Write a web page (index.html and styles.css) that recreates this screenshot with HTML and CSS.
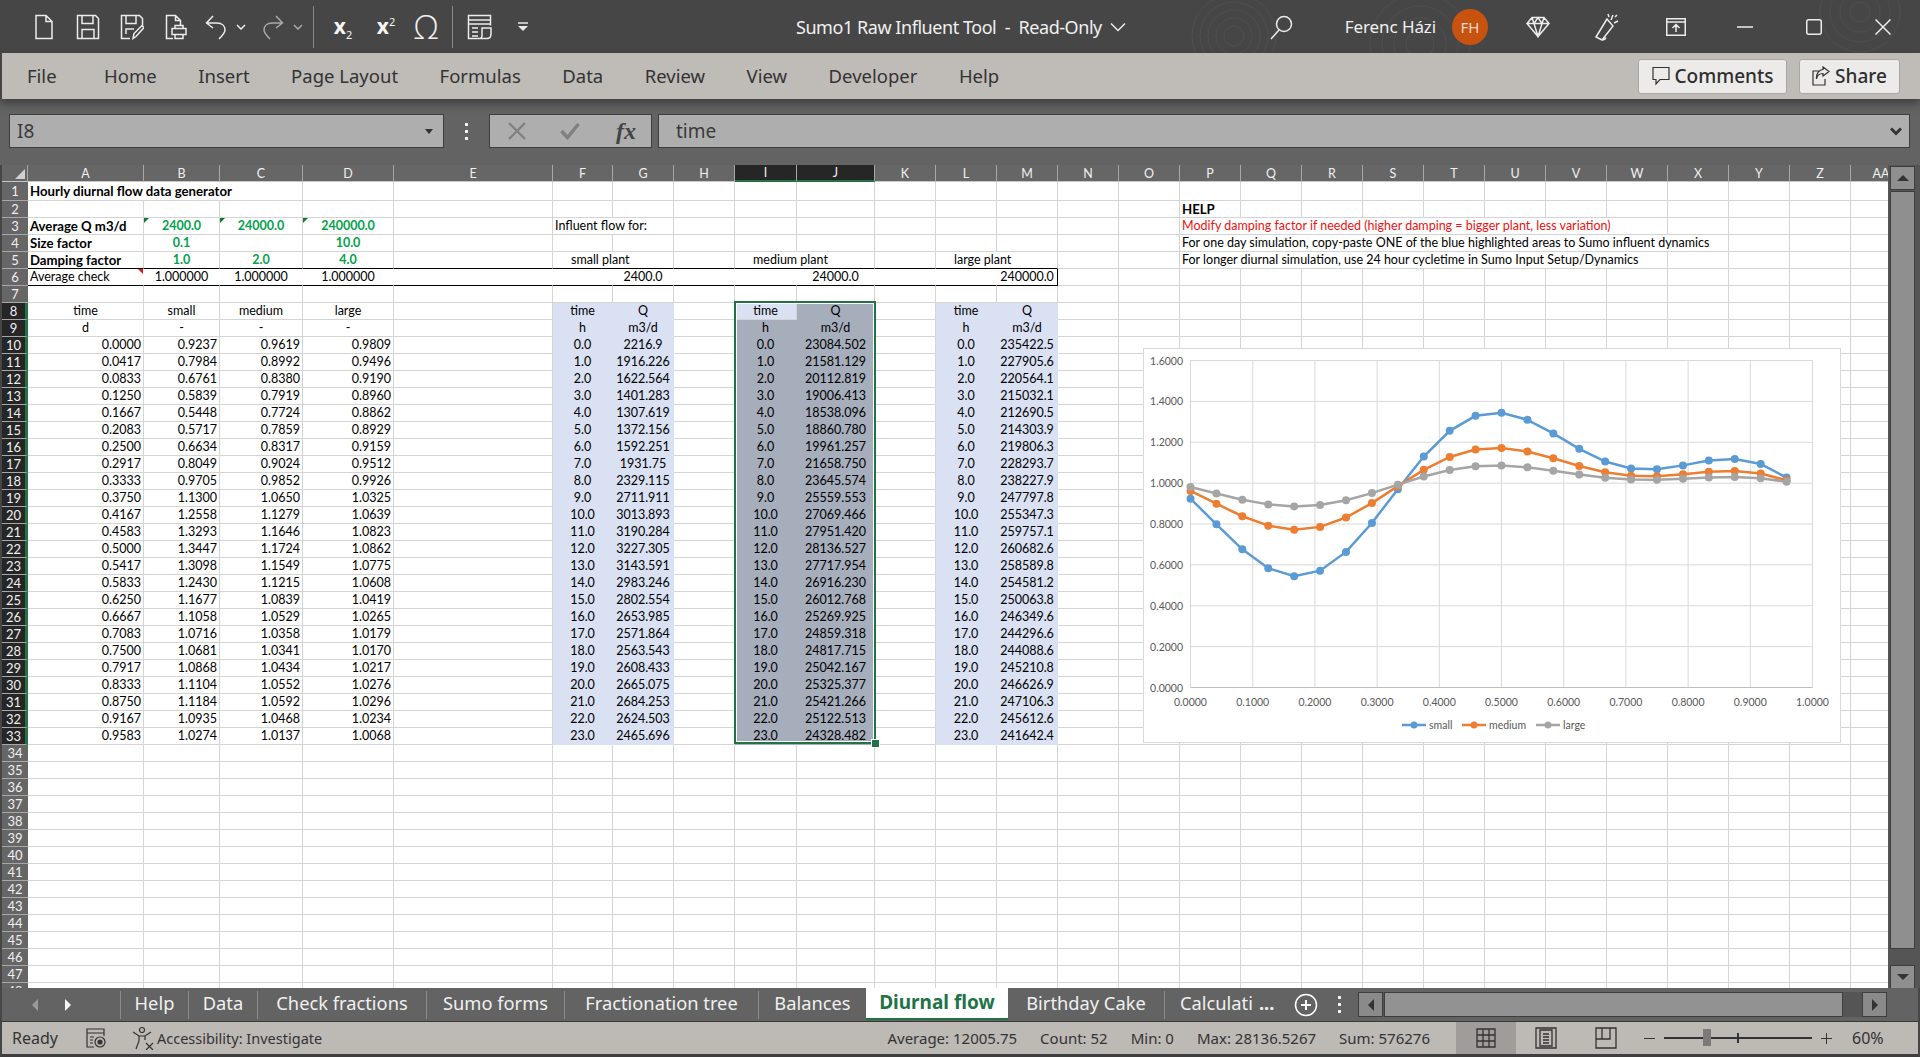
FILE: index.html
```html
<!DOCTYPE html>
<html lang="en">
  <head>
    <meta charset="UTF-8" />
    <meta name="viewport" content="width=device-width, initial-scale=1.0" />
    <title>Sumo1 Raw Influent Tool - Read-Only</title>
    <link rel="stylesheet" href="styles.css">
  </head>
  <body>
    <header class="titlebar">
      <svg class="rings" width="1920" height="53" viewBox="0 0 1920 53" fill="none" stroke="#4f4f4f">
        <circle cx="1234" cy="36" r="10" /><circle cx="1234" cy="36" r="18" /><circle cx="1234" cy="36" r="26" /><circle cx="1234" cy="36" r="34" /><circle cx="1234" cy="36" r="42" />
        <circle cx="1420" cy="44" r="14" /><circle cx="1420" cy="44" r="26" /><circle cx="1420" cy="44" r="38" /><circle cx="1420" cy="44" r="50" />
        <circle cx="1860" cy="12" r="10" /><circle cx="1860" cy="12" r="20" /><circle cx="1860" cy="12" r="30" /><circle cx="1860" cy="12" r="40" />
      </svg>
      <div class="quick-access">
        <span class="qa-btn w44"><svg class="icon" width="24" height="26" viewBox="0 0 24 26"><path d="M4 1.5h10l6 6v17H4zM14 1.5v6h6" /></svg></span>
        <span class="qa-btn w44"><svg class="icon" width="24" height="26" viewBox="0 0 24 26"><path d="M1.5 1.5h18l3 3v20h-21zM6 1.5v8h11v-8M6 24.5v-9h12v9" /></svg></span>
        <span class="qa-btn w44"><svg class="icon" width="24" height="26" viewBox="0 0 24 26"><path d="M10 24.500H1.500v-23h18l3 3v7M6 1.500v8h10v-8M6 20v-5h8M13 24.500l1-5 8-8 2 2-8 9z" /></svg></span>
        <span class="qa-btn w44"><svg class="icon" width="22" height="26" viewBox="0 0 22 26"><path d="M8 24.500H1.500v-23h9l5 5v5M10.500 1.500v5h5M7 20.500h14v-6H7zM10 14.500v-3h8v3M10 20.500v4h8v-4" /></svg></span>
        <span class="qa-btn w36"><svg class="icon" width="24" height="26" viewBox="0 0 24 26"><path d="M9 2L2.500 9l6.500 5M2.500 9H13c5 0 8 3 8 7 0 3-3 6-6 9" /></svg></span>
        <span class="qa-btn w14"><svg class="icon" width="10" height="6" viewBox="0 0 10 6"><path d="M1 1l4 4 4-4" /></svg></span>
        <span class="qa-btn w36 dim redo"><svg class="icon" width="24" height="26" viewBox="0 0 24 26"><path d="M15 2l6.500 7-6.500 5M21.500 9H11c-5 0-8 3-8 7 0 3 3 6 6 9" /></svg></span>
        <span class="qa-btn w14 dim"><svg class="icon" width="10" height="6" viewBox="0 0 10 6"><path d="M1 1l4 4 4-4" /></svg></span>
        <span class="qa-sep first"></span>
        <span class="qa-btn w44 script"><span>x<sub>2</sub></span></span>
        <span class="qa-btn w42 script"><span>x<sup>2</sup></span></span>
        <span class="qa-btn w38 omega">Ω</span>
        <span class="qa-sep"></span>
        <span class="qa-btn w40"><svg class="icon" width="26" height="26" viewBox="0 0 26 26"><path d="M13 24.500H1.500v-23h22v10M1.500 6h22M1.500 10h22M5 14h6M5 18h6M5 22h6M15 14h9v6c0 3-2 4.500-4 4.500h-7c2 0 2-2 2-3.500z" /></svg></span>
        <span class="qa-btn w46"><svg width="12" height="10" viewBox="0 0 12 10"><path d="M1 1h10" stroke="#e8e8e8" stroke-width="1.500" /><path d="M1 4h10L6 9z" fill="#e8e8e8" /></svg></span>
      </div>
      <div class="doc-title">Sumo1 Raw Influent Tool &nbsp;-&nbsp; Read-Only</div>
      <svg class="icon title-chevron" width="16" height="10" viewBox="0 0 16 10"><path d="M1 1.500l7 7 7-7" /></svg>
      <div class="account">
        <svg class="icon search" width="24" height="26" viewBox="0 0 24 26"><circle cx="15" cy="10" r="7.500" /><path d="M10 16l-8 9" /></svg>
        <span class="user-name">Ferenc Házi</span>
        <span class="avatar">FH</span>
        <span class="win-btn"><svg class="icon" width="24" height="22" viewBox="0 0 24 22"><path d="M6 1.500h12l5 6-11 13L1 7.500zM1 7.500h22M8 7.500l4 13 4-13M6 1.500l2 6 4-6 4 6 2-6" /></svg></span>
        <span class="win-btn"><svg class="icon" width="26" height="28" viewBox="0 0 26 28"><path d="M13 6L2 24l6 3 11-14zM6 25.500c1 2 5 2 6-1M17 7l2-5M20 10l4-2M15 4l-1-3M21 4l2-2" /></svg></span>
        <span class="win-btn"><svg class="icon" width="20" height="18" viewBox="0 0 20 18"><path d="M.75.75h18.500v16.500H.75zM.75 4h18.500M10 14V7M6.500 10L10 6.500l3.500 3.500" /></svg></span>
        <span class="win-btn"><svg class="icon" width="16" height="2" viewBox="0 0 16 2"><path d="M0 1h16" /></svg></span>
        <span class="win-btn"><svg class="icon" width="16" height="16" viewBox="0 0 16 16"><rect x=".75" y=".75" width="14.500" height="14.500" rx="2" /></svg></span>
        <span class="win-btn"><svg class="icon" width="16" height="16" viewBox="0 0 16 16"><path d="M.5.500l15 15M15.500.500l-15 15" /></svg></span>
      </div>
    </header>

    <nav class="ribbon">
      <ul class="ribbon-tabs">
        <li class="file-tab">File</li>
        <li>Home</li>
        <li>Insert</li>
        <li>Page Layout</li>
        <li>Formulas</li>
        <li>Data</li>
        <li>Review</li>
        <li>View</li>
        <li>Developer</li>
        <li>Help</li>
      </ul>
      <button type="button" class="ribbon-btn comments">
        <svg width="18" height="20" viewBox="0 0 18 20" fill="none" stroke="#333" stroke-width="1.200"><path d="M1 1.500h16v12H8l-4 4.500v-4.500H1z" /></svg>
        Comments
      </button>
      <button type="button" class="ribbon-btn share">
        <svg width="18" height="20" viewBox="0 0 18 20" fill="none" stroke="#333" stroke-width="1.200"><path d="M8 5H1v14h12v-6M11 1l6 4.500L11 10V7.500C7 7.500 5 10 4.500 13 4 8 7 3.500 11 3.500z" /></svg>
        Share
      </button>
    </nav>

    <div class="formula-row">
      <div class="name-box">
        <span>I8</span>
        <i class="caret-down"></i>
      </div>
      <div class="formula-dots"><i></i><i></i><i></i></div>
      <div class="formula-actions">
        <svg width="18" height="18" viewBox="0 0 18 18" fill="none" stroke="#808080" stroke-width="2.400"><path d="M1 1l16 16M17 1L1 17" /></svg>
        <svg width="20" height="18" viewBox="0 0 20 18" fill="none" stroke="#808080" stroke-width="3.500"><path d="M1.500 9l6 6.500L18.500 2" /></svg>
        <span class="fx">fx</span>
      </div>
      <div class="formula-input">
        <span>time</span>
        <svg width="12" height="9" viewBox="0 0 12 9" fill="none" stroke="#333" stroke-width="3"><path d="M1 1.500l5 5 5-5" /></svg>
      </div>
    </div>

    <main class="sheet-area">
      <div class="sheet" id="sheet">
        <table class="grid" id="grid"></table>
        <div class="selection"><i class="fill-handle"></i></div>
        <div class="chart" id="chart"></div>
      </div>
      <div class="v-scroll">
        <span class="scroll-btn"><i class="tri-up"></i></span>
        <span class="v-thumb"></span>
        <span class="scroll-btn"><i class="tri-down"></i></span>
      </div>
    </main>

    <div class="tabs-row">
      <div class="tab-nav">
        <i class="tri-left dim-tri"></i>
        <i class="tri-right"></i>
      </div>
      <div class="tab t-help">Help</div>
      <div class="tab t-data">Data</div>
      <div class="tab t-check">Check fractions</div>
      <div class="tab t-sumo">Sumo forms</div>
      <div class="tab t-tree">Fractionation tree</div>
      <div class="tab t-bal">Balances</div>
      <div class="tab active t-flow">Diurnal flow</div>
      <div class="tab t-cake">Birthday Cake</div>
      <div class="tab t-calc">Calculati <b>...</b></div>
      <svg class="add-sheet" width="24" height="24" viewBox="0 0 24 24" fill="none" stroke="#fff" stroke-width="1.500"><circle cx="12" cy="12" r="10.500" /><path d="M12 7v10M7 12h10" stroke-width="2" /></svg>
      <div class="tabs-dots"><i></i><i></i><i></i></div>
      <div class="h-scroll">
        <span class="scroll-btn h"><i class="tri-left"></i></span>
        <span class="h-thumb"></span>
        <span class="scroll-btn h"><i class="tri-right"></i></span>
      </div>
    </div>

    <footer class="statusbar">
      <span class="ready">Ready</span>
      <svg class="status-icon" width="20" height="20" viewBox="0 0 20 20" fill="none" stroke="#333" stroke-width="1.200"><path d="M8 19H1V1h17v7M1 5h17M4 9h4M4 12h3M4 15h3" /><circle cx="14" cy="14" r="5" /><circle cx="14" cy="14" r="2" fill="#333" /></svg>
      <svg class="status-icon access" width="24" height="24" viewBox="0 0 24 24" fill="none" stroke="#333" stroke-width="1.200"><circle cx="10" cy="4" r="2.500" /><path d="M1 6l6 4h6l6-4M7 10v5l-3 8M13 10v4M14 17l7 7M21 17l-7 7" /></svg>
      <span class="access-text">Accessibility: Investigate</span>
      <div class="stats">
        <span>Average: 12005.75</span>
        <span>Count: 52</span>
        <span>Min: 0</span>
        <span>Max: 28136.5267</span>
        <span>Sum: 576276</span>
      </div>
      <span class="view-btn current"><svg width="20" height="20" viewBox="0 0 20 20" fill="none" stroke="#333" stroke-width="1.300"><path d="M1 1h18v18H1zM7 1v18M13 1v18M1 7h18M1 13h18" /></svg></span>
      <span class="view-btn"><svg width="22" height="22" viewBox="0 0 22 22" fill="none" stroke="#333" stroke-width="1.300"><path d="M1 1h20v20H1zM5 3h12v16H5zM8 7h6M8 10h6M8 13h6M8 16h6" /></svg></span>
      <span class="view-btn"><svg width="22" height="22" viewBox="0 0 22 22" fill="none" stroke="#333" stroke-width="1.300"><path d="M1 1h20v20H1zM1 12h14V1M7 1v11" /></svg></span>
      <div class="zoom-ctl">
        <i class="zoom-minus"></i>
        <div class="zoom-slider"><i class="zoom-tick"></i><i class="zoom-thumb"></i></div>
        <i class="zoom-plus"></i>
        <span class="zoom-val">60%</span>
      </div>
    </footer>

    <script src="sheet.js"></script>
  </body>
</html>
```

FILE: styles.css
```css
* {
  box-sizing: border-box;
}

body {
  margin: 0;
  width: 1920px;
  height: 1057px;
  overflow: hidden;
  display: flex;
  flex-direction: column;
  background: #666;
  font-family: "Noto Sans", sans-serif;
}

ul {
  list-style: none;
  margin: 0;
  padding: 0;
}

.icon {
  fill: none;
  stroke: #ececec;
  stroke-width: 1.5;
}

/* title bar */
.titlebar {
  height: 53px;
  flex: none;
  display: flex;
  align-items: center;
  position: relative;
  background: #464646;
  color: #f0f0f0;
  overflow: hidden;
}

.rings {
  position: absolute;
  left: 0;
  top: 0;
}

.quick-access {
  display: flex;
  align-items: center;
  height: 100%;
  padding-left: 22px;
  position: relative;
}

.qa-btn {
  display: flex;
  align-items: center;
  justify-content: center;
  height: 100%;
  flex: none;
}

.w14 { width: 14px; }
.w36 { width: 36px; }
.w38 { width: 38px; }
.w40 { width: 40px; }
.w42 { width: 42px; }
.w44 { width: 44px; }
.w46 { width: 46px; }

.redo {
  margin-left: 7px;
}

.dim {
  opacity: 0.6;
}

.qa-sep {
  width: 1px;
  height: 42px;
  margin: 0 7px 0 7px;
  background: #8a8a8a;
}

.qa-sep.first {
  margin-left: 8px;
}

.script {
  font-weight: 700;
  font-size: 21px;
  color: #f5f5f5;
  line-height: 1;
}

.script sub,
.script sup {
  font-size: 11px;
  font-weight: 400;
  line-height: 0;
}

.omega {
  font-family: "Open Sans", "Noto Sans", sans-serif;
  font-size: 33px;
  font-weight: 300;
  line-height: 1;
}

.doc-title {
  margin-left: 250px;
  font-size: 18px;
  letter-spacing: -0.45px;
  white-space: nowrap;
  position: relative;
}

.title-chevron {
  margin-left: 8px;
  position: relative;
}

.account {
  margin-left: auto;
  display: flex;
  align-items: center;
  height: 100%;
  padding-right: 3px;
  position: relative;
}

.search {
  margin-right: 52px;
}

.user-name {
  font-size: 17px;
  letter-spacing: -0.1px;
  margin-right: 16px;
  white-space: nowrap;
}

.avatar {
  width: 36px;
  height: 36px;
  border-radius: 50%;
  background: #c8520f;
  color: #f3d9c8;
  font-size: 15px;
  display: flex;
  align-items: center;
  justify-content: center;
  margin-right: 15px;
}

.win-btn {
  width: 69px;
  display: flex;
  justify-content: center;
  align-items: center;
}

/* ribbon tabs */
.ribbon {
  height: 46px;
  flex: none;
  display: flex;
  align-items: center;
  background: #bfbbb7;
  color: #333;
  box-shadow: 0 5px 8px rgba(0, 0, 0, 0.35);
  position: relative;
  border-left: 2px solid #464646;
}

.ribbon-tabs {
  display: flex;
  gap: 41.500px;
  margin-left: 25px;
  padding-bottom: 2px;
  font-size: 18.500px;
  white-space: nowrap;
}

.file-tab {
  margin-right: 6px;
}

.ribbon-btn {
  height: 35px;
  display: flex;
  align-items: center;
  justify-content: center;
  gap: 5px;
  border: 1px solid #a9a6a3;
  border-radius: 3px;
  background: #ecebe9;
  color: #2e2e2e;
  font-family: "Noto Sans", sans-serif;
  font-size: 19px;
  font-weight: 500;
  padding-bottom: 1px;
}

.comments {
  width: 149px;
  margin-left: auto;
}

.share {
  width: 101px;
  margin: 0 20px 0 12px;
}

/* formula bar */
.formula-row {
  height: 66px;
  flex: none;
  display: flex;
  padding: 15px 10px 0 9px;
  background: #636363;
  color: #3a3a3a;
  font-size: 19px;
}

.name-box,
.formula-actions,
.formula-input {
  height: 34px;
  background: #aeaeae;
  border: 1px solid #3e3e3e;
  display: flex;
  align-items: center;
}

.name-box {
  width: 435px;
  padding: 0 10px 0 7px;
  justify-content: space-between;
}

.caret-down {
  width: 0;
  height: 0;
  border: 4px solid transparent;
  border-top: 5px solid #333;
  border-bottom: 0;
}

.formula-dots {
  width: 45px;
  display: flex;
  flex-direction: column;
  align-items: center;
  justify-content: center;
  gap: 4px;
  height: 34px;
}

.formula-dots i,
.tabs-dots i {
  width: 3px;
  height: 3px;
  background: #f0f0f0;
}

.formula-actions {
  width: 163px;
  padding-left: 18px;
  gap: 34px;
}

.fx {
  font-family: "Liberation Serif", serif;
  font-style: italic;
  font-weight: 700;
  font-size: 24px;
  color: #444;
  margin-left: 2px;
}

.formula-input {
  flex: 1;
  margin-left: 6px;
  padding: 0 7px 0 17px;
  justify-content: space-between;
}

/* sheet */
.sheet-area {
  height: 823px;
  flex: none;
  display: flex;
}

.sheet {
  width: 1888px;
  flex: none;
  overflow: hidden;
  position: relative;
  padding-left: 2px;
  background: #464646;
}

.grid {
  border-collapse: separate;
  border-spacing: 0;
  table-layout: fixed;
  width: 1910px;
  font-family: Lato, "Liberation Sans", sans-serif;
  font-size: 12.500px;
  color: #000;
  background: #fff;
}

.grid th {
  padding: 0;
  font-weight: 400;
  background: #666;
  color: #f0f0f0;
  text-align: center;
  overflow: hidden;
}

.grid thead th {
  height: 16px;
  border-right: 1px solid #a8a8a8;
  border-bottom: 1px solid #c8c8c8;
}

.grid thead th.corner {
  position: relative;
}

.corner::after {
  content: "";
  position: absolute;
  right: 2px;
  bottom: 2px;
  border-style: solid;
  border-width: 0 0 10px 10px;
  border-color: transparent transparent #d0d0d0 transparent;
}

.grid thead th.on {
  background: #262626;
  border-bottom: 2px solid #217346;
}

.grid tbody th {
  border-bottom: 1px solid #a8a8a8;
  font-size: 13px;
}

.grid tbody th.on {
  background: #262626;
  border-right: 3px solid #217346;
}

.grid td {
  height: 17px;
  padding: 0 2px;
  border-right: 1px solid #d4d4d4;
  border-bottom: 1px solid #d4d4d4;
  white-space: nowrap;
  overflow: hidden;
  line-height: 16px;
  position: relative;
}

.grid tr.tall td {
  height: 19px;
}

.grid td.b {
  font-size: 13.200px;
  font-weight: 700;
}

.grid td.c {
  text-align: center;
}

.grid td.r {
  text-align: right;
  padding-right: 2px;
}

.grid td.plant {
  padding-left: 18px;
}

.grid td.in {
  color: #00a24a;
  font-weight: 700;
  text-align: center;
}

.grid td.red {
  color: #f01010;
}

.grid td.fill {
  background: #d9e1f2;
  border-color: transparent;
}

.grid td.sel {
  background: #a6adbb;
  border-color: transparent;
}

.grid td.first {
  background: #d9e1f2;
}

.grid td.rule {
  border-bottom-color: #000;
}

.grid td.boxed {
  border-right-color: #fff;
  border-bottom-color: #000;
}

.grid td.boxed-end {
  border-right-color: #000;
}

.grid td.flag-g::before {
  content: "";
  position: absolute;
  left: 0;
  top: 0;
  border-style: solid;
  border-width: 5px 5px 0 0;
  border-color: #0b7a2b transparent transparent transparent;
}

.grid td.flag-r::after {
  content: "";
  position: absolute;
  right: 0;
  top: 0;
  border-style: solid;
  border-width: 0 5px 5px 0;
  border-color: transparent #f01010 transparent transparent;
}

.selection {
  position: absolute;
  left: 734px;
  top: 136px;
  width: 142px;
  height: 443px;
  border: 2px solid #217346;
  box-shadow: inset 0 0 0 1px #fff;
}

.fill-handle {
  position: absolute;
  right: -5px;
  bottom: -5px;
  width: 7px;
  height: 7px;
  background: #217346;
  box-shadow: 0 0 0 1px #fff;
}

.chart {
  position: absolute;
  left: 1143px;
  top: 183px;
  width: 698px;
  height: 395px;
  background: #fff;
  border: 1px solid #d9d9d9;
}

.chart text {
  font-family: Lato, "Liberation Sans", sans-serif;
  font-size: 10.500px;
  fill: #595959;
}

/* scrollbars */
.v-scroll {
  width: 32px;
  flex: none;
  display: flex;
  flex-direction: column;
  padding: 1px 5px 0 2px;
  background: #555;
}

.scroll-btn {
  width: 25px;
  height: 24px;
  flex: none;
  display: flex;
  align-items: center;
  justify-content: center;
  background: #8f8f8f;
  border: 1px solid #3e3e3e;
}

.v-thumb {
  flex: none;
  height: 758px;
  margin-top: 1px;
  margin-bottom: 16px;
  background: #8f8f8f;
  border: 1px solid #3e3e3e;
}

.tri-up,
.tri-down,
.tri-left,
.tri-right {
  width: 0;
  height: 0;
  display: block;
  border-style: solid;
}

.tri-up {
  border-width: 0 6px 6px;
  border-color: transparent transparent #333;
}

.tri-down {
  border-width: 6px 6px 0;
  border-color: #333 transparent transparent;
}

.tri-left {
  border-width: 6px 6px 6px 0;
  border-color: transparent #333 transparent transparent;
}

.tri-right {
  border-width: 6px 0 6px 6px;
  border-color: transparent transparent transparent #333;
}

/* sheet tabs */
.tabs-row {
  height: 34px;
  flex: none;
  display: flex;
  align-items: center;
  background: #636363;
  color: #f0f0f0;
  border-left: 2px solid #464646;
  border-right: 2px solid #464646;
  border-bottom: 1px solid #3a3a3a;
  font-size: 18.300px;
}

.tab-nav {
  width: 118px;
  height: 100%;
  display: flex;
  align-items: center;
  gap: 27px;
  padding-left: 30px;
}

.tab-nav .tri-left {
  border-right-color: #9a9a9a;
}

.tab-nav .tri-right {
  border-left-color: #f5f5f5;
}

.tab {
  height: 28px;
  padding-bottom: 4px;
  display: flex;
  align-items: center;
  justify-content: center;
  border-left: 1px solid #8c8c8c;
  white-space: nowrap;
  flex: none;
}

.t-help { width: 68px; }
.t-data { width: 69px; }
.t-check { width: 169px; }
.t-sumo { width: 138px; }
.t-tree { width: 194px; }
.t-bal { width: 108px; }
.t-flow { width: 142px; }
.t-cake { width: 156px; }

.t-calc {
  width: 119px;
  justify-content: flex-start;
  padding-left: 15px;
}

.t-calc b {
  margin-left: 6px;
  font-weight: 700;
}

.tab.active {
  height: 33px;
  margin-top: -1px;
  align-self: flex-start;
  padding-bottom: 1px;
  background: #fff;
  color: #217346;
  font-size: 19px;
  font-weight: 700;
  border-left: 0;
  border-bottom: 2px solid #217346;
}

.tab.active + .tab {
  border-left: 0;
}

.add-sheet {
  flex: none;
  margin-left: 11px;
}

.tabs-dots {
  display: flex;
  flex-direction: column;
  gap: 4px;
  margin-left: 20px;
  flex: none;
}

.h-scroll {
  margin-left: 17px;
  height: 25px;
  display: flex;
  width: 529px;
  flex: none;
  background: #555;
}

.scroll-btn.h {
  height: 25px;
  background: #8a8a8a;
}

.h-thumb {
  width: 460px;
  margin-right: 19px;
  margin-left: 1px;
  background: #929292;
  border: 1px solid #3e3e3e;
}

/* status bar */
.statusbar {
  height: 35px;
  flex: none;
  display: flex;
  align-items: center;
  background: #bdb9b5;
  color: #333;
  font-size: 15px;
  border-left: 2px solid #464646;
  border-right: 2px solid #464646;
  border-bottom: 3px solid #3e3e3e;
}

.ready {
  margin-left: 10px;
  font-size: 16px;
}

.status-icon {
  margin-left: 28px;
}

.status-icon.access {
  margin-left: 26px;
}

.access-text {
  margin-left: 1px;
  font-size: 14.500px;
}

.stats {
  margin-left: auto;
  display: flex;
  gap: 23px;
  margin-right: 26px;
}

.view-btn {
  width: 60px;
  height: 100%;
  display: flex;
  align-items: center;
  justify-content: center;
}

.view-btn.current {
  background: #9f9c99;
}

.zoom-ctl {
  width: 282px;
  display: flex;
  align-items: center;
  padding-left: 8px;
}

.zoom-minus {
  width: 11px;
  height: 1px;
  background: #333;
}

.zoom-slider {
  width: 148px;
  height: 2px;
  margin-left: 9px;
  background: #333;
  position: relative;
}

.zoom-tick {
  position: absolute;
  left: 73px;
  top: -4px;
  width: 2px;
  height: 10px;
  background: #333;
}

.zoom-thumb {
  position: absolute;
  left: 39px;
  top: -8px;
  width: 8px;
  height: 17px;
  background: #7c7a78;
}

.zoom-plus {
  width: 11px;
  height: 11px;
  margin-left: 9px;
  background: linear-gradient(#333, #333) center / 11px 1px no-repeat,
    linear-gradient(#333, #333) center / 1px 11px no-repeat;
}

.zoom-val {
  margin-left: 20px;
  font-size: 16px;
}
```

FILE: sheet.js
```js
const COLS = ["A", "B", "C", "D", "E", "F", "G", "H", "I", "J", "K", "L", "M", "N", "O", "P", "Q", "R", "S", "T", "U", "V", "W", "X", "Y", "Z", "AA"];
const WIDTHS = [116, 76, 83, 91, 159, 60, 61, 61, 62, 78, 61, 61, 61, 61, 61, 61, 61, 61, 61, 61, 61, 61, 61, 61, 61, 61, 61];

const days = ["0.0000", "0.0417", "0.0833", "0.1250", "0.1667", "0.2083", "0.2500", "0.2917", "0.3333", "0.3750", "0.4167", "0.4583", "0.5000", "0.5417", "0.5833", "0.6250", "0.6667", "0.7083", "0.7500", "0.7917", "0.8333", "0.8750", "0.9167", "0.9583"];
const small = ["0.9237", "0.7984", "0.6761", "0.5839", "0.5448", "0.5717", "0.6634", "0.8049", "0.9705", "1.1300", "1.2558", "1.3293", "1.3447", "1.3098", "1.2430", "1.1677", "1.1058", "1.0716", "1.0681", "1.0868", "1.1104", "1.1184", "1.0935", "1.0274"];
const medium = ["0.9619", "0.8992", "0.8380", "0.7919", "0.7724", "0.7859", "0.8317", "0.9024", "0.9852", "1.0650", "1.1279", "1.1646", "1.1724", "1.1549", "1.1215", "1.0839", "1.0529", "1.0358", "1.0341", "1.0434", "1.0552", "1.0592", "1.0468", "1.0137"];
const large = ["0.9809", "0.9496", "0.9190", "0.8960", "0.8862", "0.8929", "0.9159", "0.9512", "0.9926", "1.0325", "1.0639", "1.0823", "1.0862", "1.0775", "1.0608", "1.0419", "1.0265", "1.0179", "1.0170", "1.0217", "1.0276", "1.0296", "1.0234", "1.0068"];
const flowS = ["2216.9", "1916.226", "1622.564", "1401.283", "1307.619", "1372.156", "1592.251", "1931.75", "2329.115", "2711.911", "3013.893", "3190.284", "3227.305", "3143.591", "2983.246", "2802.554", "2653.985", "2571.864", "2563.543", "2608.433", "2665.075", "2684.253", "2624.503", "2465.696"];
const flowM = ["23084.502", "21581.129", "20112.819", "19006.413", "18538.096", "18860.780", "19961.257", "21658.750", "23645.574", "25559.553", "27069.466", "27951.420", "28136.527", "27717.954", "26916.230", "26012.768", "25269.925", "24859.318", "24817.715", "25042.167", "25325.377", "25421.266", "25122.513", "24328.482"];
const flowL = ["235422.5", "227905.6", "220564.1", "215032.1", "212690.5", "214303.9", "219806.3", "228293.7", "238227.9", "247797.8", "255347.3", "259757.1", "260682.6", "258589.8", "254581.2", "250063.8", "246349.6", "244296.6", "244088.6", "245210.8", "246626.9", "247106.3", "245612.6", "241642.4"];

// row -> column -> [text, classes, colspan]
const cells = {
  1: { A: ["Hourly diurnal flow data generator", "b", 3] },
  2: { P: ["HELP", "b"] },
  3: {
    A: ["Average Q m3/d", "b"],
    B: ["2400.0", "in flag-g"],
    C: ["24000.0", "in flag-g"],
    D: ["240000.0", "in flag-g"],
    F: ["Influent flow for:", "l", 2],
    P: ["Modify damping factor if needed (higher damping = bigger plant, less variation)", "l red", 8],
  },
  4: {
    A: ["Size factor", "b"],
    B: ["0.1", "in"],
    D: ["10.0", "in"],
    P: ["For one day simulation, copy-paste ONE of the blue highlighted areas to Sumo influent dynamics", "l", 9],
  },
  5: {
    A: ["Damping factor", "b rule"],
    B: ["1.0", "in rule"],
    C: ["2.0", "in rule"],
    D: ["4.0", "in rule"],
    E: ["", "rule"],
    F: ["small plant", "plant rule", 2],
    H: ["", "rule"],
    I: ["medium plant", "plant rule", 2],
    K: ["", "rule"],
    L: ["large plant", "plant rule", 2],
    P: ["For longer diurnal simulation, use 24 hour cycletime in Sumo Input Setup/Dynamics", "l", 8],
  },
  6: {
    A: ["Average check", "l boxed flag-r"],
    B: ["1.000000", "c boxed"],
    C: ["1.000000", "c boxed"],
    D: ["1.000000", "c boxed"],
    E: ["", "boxed"],
    F: ["", "boxed"],
    G: ["2400.0", "c boxed"],
    H: ["", "boxed"],
    I: ["", "boxed"],
    J: ["24000.0", "c boxed"],
    K: ["", "boxed"],
    L: ["", "boxed"],
    M: ["240000.0", "c boxed boxed-end"],
  },
  8: {
    A: ["time", "c"], B: ["small", "c"], C: ["medium", "c"], D: ["large", "c"],
    F: ["time", "c fill"], G: ["Q", "c fill"],
    I: ["time", "c first"], J: ["Q", "c sel"],
    L: ["time", "c fill"], M: ["Q", "c fill"],
  },
  9: {
    A: ["d", "c"], B: ["-", "c"], C: ["-", "c"], D: ["-", "c"],
    F: ["h", "c fill"], G: ["m3/d", "c fill"],
    I: ["h", "c sel"], J: ["m3/d", "c sel"],
    L: ["h", "c fill"], M: ["m3/d", "c fill"],
  },
};

days.forEach((day, i) => {
  const hour = i + ".0";
  cells[10 + i] = {
    A: [day, "r"], B: [small[i], "r"], C: [medium[i], "r"], D: [large[i], "r"],
    F: [hour, "c fill"], G: [flowS[i], "c fill"],
    I: [hour, "c sel"], J: [flowM[i], "c sel"],
    L: [hour, "c fill"], M: [flowL[i], "c fill"],
  };
});

function buildGrid() {
  let html = '<colgroup><col style="width:26px">';
  WIDTHS.forEach((w) => (html += `<col style="width:${w}px">`));
  html += '</colgroup><thead><tr><th class="corner"></th>';
  COLS.forEach((c) => (html += `<th class="${c === "I" || c === "J" ? "on" : ""}">${c}</th>`));
  html += "</tr></thead><tbody>";

  for (let r = 1; r <= 48; r++) {
    const row = cells[r] || {};
    html += `<tr class="${r === 1 ? "tall" : ""}"><th class="${r >= 8 && r <= 33 ? "on" : ""}">${r}</th>`;
    for (let c = 0; c < COLS.length; c++) {
      const cell = row[COLS[c]];
      if (!cell) {
        html += "<td></td>";
        continue;
      }
      const span = cell[2] || 1;
      html += `<td class="${cell[1]}" colspan="${span}">${cell[0]}</td>`;
      c += span - 1;
    }
    html += "</tr>";
  }
  document.getElementById("grid").innerHTML = html + "</tbody>";
}

function buildChart() {
  const left = 46.5, right = 668.5, top = 11.5, bottom = 338.5;
  const xOf = (v) => left + v * (right - left);
  const yOf = (v) => bottom - (v / 1.6) * (bottom - top);
  let svg = '<svg width="696" height="393" viewBox="0 0 696 393">';

  for (let i = 0; i <= 8; i++) {
    const y = yOf(i * 0.2);
    svg += `<line x1="${left}" x2="${right}" y1="${y}" y2="${y}" stroke="#d9d9d9"/>`;
    svg += `<text x="39" y="${y + 4}" text-anchor="end">${(i * 0.2).toFixed(4)}</text>`;
  }
  for (let i = 0; i <= 10; i++) {
    const x = xOf(i / 10);
    svg += `<line x1="${x}" x2="${x}" y1="${top}" y2="${bottom}" stroke="#d9d9d9"/>`;
    svg += `<text x="${x}" y="357" text-anchor="middle">${(i / 10).toFixed(4)}</text>`;
  }
  svg += `<line x1="${left}" x2="${right}" y1="${bottom}" y2="${bottom}" stroke="#bfbfbf"/>`;

  [[large, "#a5a5a5"], [medium, "#ed7d31"], [small, "#5b9bd5"]].reverse().forEach(([values, color]) => {
    const pts = values.map((v, i) => [xOf(+days[i]), yOf(+v)]);
    svg += `<polyline fill="none" stroke="${color}" stroke-width="2.500" points="${pts.map((p) => p.join(",")).join(" ")}"/>`;
    pts.forEach((p) => (svg += `<circle cx="${p[0]}" cy="${p[1]}" r="4" fill="${color}"/>`));
  });

  [["small", "#5b9bd5", 258], ["medium", "#ed7d31", 318], ["large", "#a5a5a5", 392]].forEach(([name, color, x]) => {
    svg += `<line x1="${x}" x2="${x + 24}" y1="376" y2="376" stroke="${color}" stroke-width="2.500"/>`;
    svg += `<circle cx="${x + 12}" cy="376" r="3.500" fill="${color}"/>`;
    svg += `<text x="${x + 27}" y="380">${name}</text>`;
  });

  document.getElementById("chart").innerHTML = svg + "</svg>";
}

buildGrid();
buildChart();
```
